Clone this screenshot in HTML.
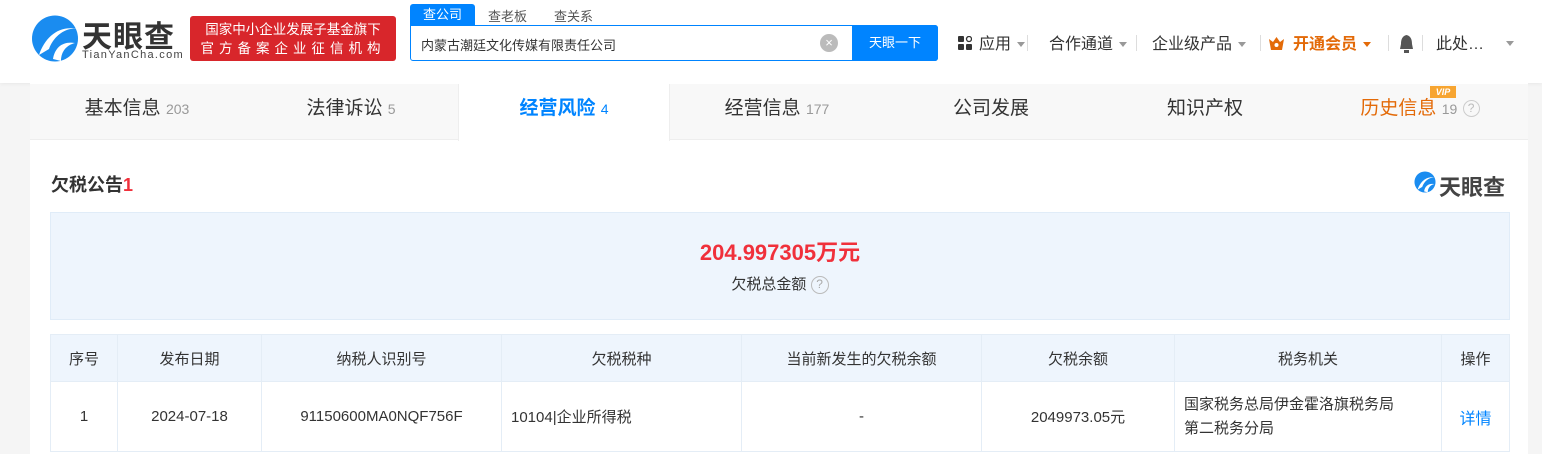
<!DOCTYPE html>
<html><head><meta charset="utf-8"><style>
*{margin:0;padding:0;box-sizing:border-box}
body{width:1542px;height:454px;overflow:hidden;background:#f5f5f5;font-family:"Liberation Sans","Noto Sans CJK SC",sans-serif;color:#333;position:relative}
.abs{position:absolute}
.hdr{left:0;top:0;width:1542px;height:83px;background:#fff;box-shadow:0 1px 4px rgba(0,0,0,.06)}
.nav{top:30px;font-size:16px;color:#333;white-space:nowrap}
.caret{display:inline-block;border:4px solid transparent;border-top:5px solid #999;vertical-align:middle;margin-left:6px;margin-top:4px}
.sep{top:35px;width:1px;height:16px;background:#ddd}
.panel{left:30px;top:83px;width:1498px;height:371px;background:#fff}
.tabs{left:30px;top:84px;width:1498px;height:56px;background:#f8f8f8;border-bottom:1px solid #eee}
.tab{top:84px;height:56px;line-height:50px;font-size:19px;color:#333;text-align:center}
.tab small{font-size:14px;color:#999}
table{border-collapse:collapse;position:absolute;left:50px;top:334px;width:1460px;font-size:15px}
td,th{border:1px solid #e4edf6;text-align:center;font-weight:normal;color:#333}
th{background:#eef5fd;height:47px}
td{height:70px}
</style></head><body>
<div class="abs hdr"></div>
<svg class="abs" style="left:31px;top:15px" width="48" height="47" viewBox="0 0 48 47"><circle cx="24" cy="23.5" r="23" fill="#1a8cf0"/><path d="M8 40 C14 22 28 10 46 14 C34 12 22 22 18 34 Z" fill="#fff"/><path d="M22 44 C24 32 32 26 44 28 C36 30 30 36 30 46Z" fill="#fff"/></svg>
<div class="abs" style="left:82px;top:12px;font-size:30px;font-weight:bold;color:#333;letter-spacing:1px">天眼查</div>
<div class="abs" style="left:82px;top:49px;font-size:11px;color:#444;letter-spacing:1.3px">TianYanCha.com</div>
<div class="abs" style="left:190px;top:16px;width:206px;height:45px;background:#d8262b;border-radius:3px;color:#fff;font-size:13.5px;text-align:center;line-height:19px;padding-top:4px">国家中小企业发展子基金旗下<br><span style="letter-spacing:5px">官方备案企业征信机构</span></div>
<div class="abs" style="left:410px;top:4px;width:65px;height:22px;background:#0084ff;color:#fff;font-size:13px;text-align:center;line-height:22px;border-radius:3px 3px 0 0">查公司</div>
<div class="abs" style="left:488px;top:6px;font-size:13px;color:#555">查老板</div>
<div class="abs" style="left:554px;top:6px;font-size:13px;color:#555">查关系</div>
<div class="abs" style="left:410px;top:25px;width:528px;height:36px;border:1px solid #0084ff;border-radius:0 3px 3px 3px;background:#fff"></div>
<div class="abs" style="left:421px;top:35px;font-size:13px;color:#333">内蒙古潮廷文化传媒有限责任公司</div>
<div class="abs" style="left:820px;top:34px;width:18px;height:18px;border-radius:50%;background:#bbb;color:#fff;font-size:13px;line-height:18px;text-align:center">×</div>
<div class="abs" style="left:852px;top:25px;width:86px;height:36px;background:#0084ff;color:#fff;font-size:13px;text-align:center;line-height:36px;border-radius:0 3px 3px 0">天眼一下</div>
<svg class="abs" style="left:958px;top:36px" width="14" height="14"><rect x="0" y="0" width="6" height="6" rx="1" fill="#333"/><circle cx="11" cy="3" r="2.5" fill="none" stroke="#333" stroke-width="1.3"/><rect x="0" y="8" width="6" height="6" rx="1" fill="#333"/><rect x="8" y="8" width="6" height="6" rx="1" fill="#333"/></svg>
<div class="abs nav" style="left:979px">应用<span class="caret"></span></div>
<div class="abs sep" style="left:1027px"></div>
<div class="abs nav" style="left:1049px">合作通道<span class="caret"></span></div>
<div class="abs sep" style="left:1136px"></div>
<div class="abs nav" style="left:1152px">企业级产品<span class="caret"></span></div>
<div class="abs sep" style="left:1260px"></div>
<svg class="abs" style="left:1269px;top:37px" width="15" height="13"><path d="M0 2 L4 5 L7.5 0 L11 5 L15 2 L13 13 L2 13Z" fill="#e36a08"/><circle cx="7.5" cy="8" r="2" fill="#fff"/></svg>
<div class="abs nav" style="left:1293px;color:#e36a08;font-weight:bold">开通会员<span class="caret" style="border-top-color:#e36a08"></span></div>
<div class="abs sep" style="left:1388px"></div>
<svg class="abs" style="left:1398px;top:34px" width="17" height="20"><path d="M8.5 1 C4 2 3 6 3 10 L2 15 L15 15 L14 10 C14 6 13 2 8.5 1Z" fill="#555"/><rect x="6" y="16" width="5" height="3" fill="#555"/></svg>
<div class="abs sep" style="left:1422px"></div>
<div class="abs nav" style="left:1436px">此处…</div>
<span class="abs caret" style="left:1500px;top:37px"></span>

<div class="abs panel"></div>
<div class="abs tabs"></div>
<div class="abs" style="left:458px;top:84px;width:212px;height:57px;background:#fff;border-left:1px solid #eee;border-right:1px solid #eee"></div>
<div class="abs tab" style="left:30px;width:214px">基本信息 <small>203</small></div>
<div class="abs tab" style="left:244px;width:214px">法律诉讼 <small>5</small></div>
<div class="abs tab" style="left:458px;width:212px;color:#0084ff;font-weight:bold">经营风险 <small style="color:#0084ff;font-weight:normal">4</small></div>
<div class="abs tab" style="left:670px;width:214px">经营信息 <small>177</small></div>
<div class="abs tab" style="left:884px;width:214px">公司发展</div>
<div class="abs tab" style="left:1098px;width:214px">知识产权</div>
<div class="abs tab" style="left:1312px;width:216px;color:#e36a08">历史信息 <small>19</small> <span style="display:inline-block;width:17px;height:17px;border:1.5px solid #ccc;border-radius:50%;font-size:12px;line-height:14px;color:#bbb;vertical-align:middle">?</span></div>
<div class="abs" style="left:1430px;top:86px;width:26px;height:12px;background:#f7a531;color:#fff;font-size:9px;font-style:italic;font-weight:bold;text-align:center;line-height:12px">VIP</div>

<div class="abs" style="left:51px;top:171px;font-size:18px;font-weight:bold;color:#333">欠税公告<span style="color:#f0303b">1</span></div>
<svg class="abs" style="left:1414px;top:171px" width="22" height="22" viewBox="0 0 48 47"><circle cx="24" cy="23.5" r="23" fill="#1a8cf0"/><path d="M8 40 C14 22 28 10 46 14 C34 12 22 22 18 34 Z" fill="#fff"/><path d="M22 44 C24 32 32 26 44 28 C36 30 30 36 30 46Z" fill="#fff"/></svg>
<div class="abs" style="left:1439px;top:170px;font-size:22px;font-weight:bold;color:#444">天眼查</div>

<div class="abs" style="left:50px;top:212px;width:1460px;height:108px;background:#eef5fd;border:1px solid #e0ecf8"></div>
<div class="abs" style="left:50px;top:235px;width:1460px;text-align:center;font-size:22px;font-weight:bold;color:#f0303b">204.997305万元</div>
<div class="abs" style="left:50px;top:273px;width:1460px;text-align:center;font-size:15px;color:#333">欠税总金额 <span style="display:inline-block;width:18px;height:18px;border:1.5px solid #bbb;border-radius:50%;font-size:12px;line-height:15px;color:#aaa;vertical-align:middle">?</span></div>

<table>
<tr><th style="width:67px">序号</th><th style="width:144px">发布日期</th><th style="width:240px">纳税人识别号</th><th style="width:240px">欠税税种</th><th style="width:240px">当前新发生的欠税余额</th><th style="width:193px">欠税余额</th><th style="width:267px">税务机关</th><th>操作</th></tr>
<tr><td>1</td><td>2024-07-18</td><td>91150600MA0NQF756F</td><td style="text-align:left;padding-left:9px">10104|企业所得税</td><td>-</td><td>2049973.05元</td><td style="text-align:left;padding-left:9px;line-height:24px">国家税务总局伊金霍洛旗税务局<br>第二税务分局</td><td style="color:#0084ff;font-size:16px">详情</td></tr>
</table>
</body></html>
